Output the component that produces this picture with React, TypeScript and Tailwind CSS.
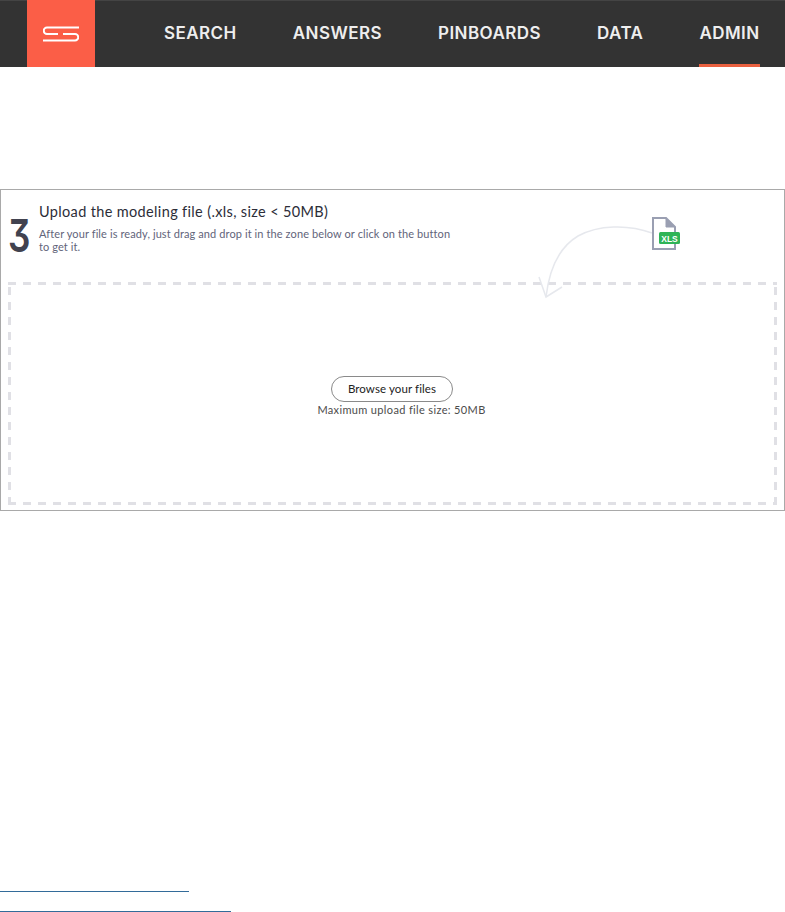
const navItems = ["SEARCH", "ANSWERS", "PINBOARDS", "DATA", "ADMIN"];

function Logo() {
  return (
    <svg width="36" height="16" viewBox="0 0 36 16" fill="none" stroke="#fff" strokeWidth="2">
      <path d="M36 1.5H4a3 3 0 0 0 0 6.5H15" />
      <path d="M0 14.5H32a3.2 3.2 0 0 0 0-6.5H20" />
    </svg>
  );
}

function FileArrow() {
  return (
    <svg width="150" height="90" viewBox="0 0 150 90" fill="none" className="absolute left-[535px] top-[26px]">
      <path d="M116 17C92 8 62 9 42 20C22 32 13 55 10 81" stroke="#e6e8ed" strokeWidth="1.5" />
      <path d="M3 61L10 81L26 71" stroke="#e6e8ed" strokeWidth="1.5" />
      <path d="M117 2H130L139 11V33H117Z" fill="#fff" stroke="#9a9fb2" strokeWidth="2" />
      <path d="M130 2V11H139Z" fill="#9a9fb2" stroke="#9a9fb2" strokeWidth="1" />
      <rect x="123" y="16" width="21" height="12" rx="1.5" fill="#2fb457" />
      <text x="133.5" y="25.5" textAnchor="middle" fontSize="8.5" fontWeight="700" fill="#fff" fontFamily="'Liberation Sans', sans-serif">XLS</text>
    </svg>
  );
}

export default function App() {
  return (
    <div className="min-h-[912px] w-[785px] overflow-hidden bg-white font-['Lato','Noto_Sans',sans-serif]">
      <header className="flex h-[67px] items-stretch bg-[#333333] pl-[27px] shadow-[inset_0_1px_0_#444]">
        <div className="flex w-[68px] items-center justify-center bg-[#fb5e47]">
          <Logo />
        </div>
        <nav className="ml-[69px] flex gap-[56px]">
          {navItems.map((item) => (
            <a
              key={item}
              className={`flex items-center border-b-[3px] pt-[3px] font-['Inter',sans-serif] text-[17px] font-semibold tracking-[0.45px] text-[#eeeeee] ${
                item === "ADMIN" ? "border-[#e9603f]" : "border-transparent"
              }`}
            >
              {item}
            </a>
          ))}
        </nav>
      </header>

      <section className="relative mt-[122px] h-[322px] border border-[#a9a9a9] px-[7px] pt-[12px]">
        <FileArrow />
        <div className="flex h-[80px] items-start">
          <span className="mt-[12px] w-[31px] origin-left scale-x-[0.78] font-['Inter',sans-serif] text-[45px] leading-[44px] font-semibold text-[#41424f] [font-feature-settings:'cv09']">3</span>
          <div className="relative">
            <h2 className="text-[14.5px] leading-[20px] tracking-[0.35px] text-[#2c2d38]">Upload the modeling file (.xls, size &lt; 50MB)</h2>
            <p className="mt-[5px] w-[417px] text-[11px] leading-[13px] tracking-[0.1px] text-[#62647a]">
              After your file is ready, just drag and drop it in the zone below or click on the button to get it.
            </p>
          </div>
        </div>
        <div className="flex h-[223px] flex-col items-center justify-center bg-[repeating-linear-gradient(90deg,#e0e0e5_0_8px,transparent_8px_15px),repeating-linear-gradient(90deg,#e0e0e5_0_8px,transparent_8px_15px),repeating-linear-gradient(0deg,#e0e0e5_0_8px,transparent_8px_15px),repeating-linear-gradient(0deg,#e0e0e5_0_8px,transparent_8px_15px)] bg-[size:100%_3px,100%_3px,3px_100%,3px_100%] bg-[position:0_0,0_100%,0_0,100%_0] bg-no-repeat pt-[6px]">
          <button className="mr-[1px] h-[26px] w-[122px] rounded-full border border-[#8a8a8a] bg-white text-[11.5px] tracking-[0.1px] text-[#222222]">
            Browse your files
          </button>
          <p className="ml-[18px] text-[11px] leading-[15px] tracking-[0.35px] text-[#4b4b4b]">Maximum upload file size: 50MB</p>
        </div>
      </section>

      <div className="mt-[380px] h-px w-[189px] bg-[#336b99]" />
      <div className="mt-[19px] h-px w-[231px] bg-[#336b99]" />
    </div>
  );
}
